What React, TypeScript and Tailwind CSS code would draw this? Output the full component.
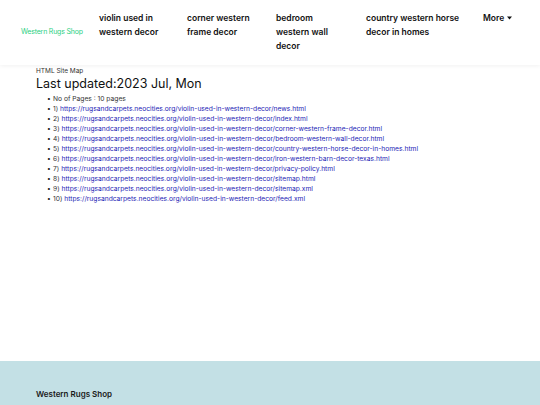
const urls = [
  "news.html",
  "index.html",
  "corner-western-frame-decor.html",
  "bedroom-western-wall-decor.html",
  "country-western-horse-decor-in-homes.html",
  "iron-western-barn-decor-texas.html",
  "privacy-policy.html",
  "sitemap.html",
  "sitemap.xml",
  "feed.xml",
].map((p) => "https://rugsandcarpets.neocities.org/violin-used-in-western-decor/" + p);

const nav = [
  { label: "violin used in western decor", cls: "w-[88px]", inner: "max-w-[72px]" },
  { label: "corner western frame decor", cls: "w-[89px]", inner: "max-w-[72px]" },
  { label: "bedroom western wall decor", cls: "w-[90px]", inner: "max-w-[60px]" },
  { label: "country western horse decor in homes", cls: "w-[117px]", inner: "max-w-[100px]" },
];

function Item({ children }: { children: React.ReactNode }) {
  return (
    <li className="flex">
      <span className="w-[6px] shrink-0 text-[#222]">•</span>
      <span>{children}</span>
    </li>
  );
}

export default function App() {
  return (
    <div className="flex min-h-[405px] flex-col bg-white font-['Inter',sans-serif] text-[#222]">
      <header className="flex h-[65px] items-start shadow-[0_1px_4px_rgba(0,0,0,0.06)]">
        <a className="ml-[21px] mt-[27px] w-[78px] text-[7px] tracking-[-0.2px] text-[#2bd07f]">Western Rugs Shop</a>
        <nav className="mt-[11px] flex">
          {nav.map((n) => (
            <div key={n.label} className={n.cls}>
              <a className={`block text-[8.5px] font-semibold leading-[14px] text-[#111] ${n.inner}`}>{n.label}</a>
            </div>
          ))}
          <a className="flex items-center gap-[3px] self-start text-[8.5px] font-semibold leading-[14px] text-[#111]">
            More
            <svg width="5" height="4" viewBox="0 0 5 4"><path d="M0 0.5h5L2.5 3.5z" fill="#111" /></svg>
          </a>
        </nav>
      </header>

      <main className="flex-1 px-[36px] pt-[2px]">
        <p className="text-[6.5px] leading-[8px] text-[#333]">HTML Site Map</p>
        <h1 className="text-[12.5px] leading-[17px] text-[#111]">Last updated:2023 Jul, Mon</h1>
        <ul className="mt-[2px] pl-[11px] text-[6.7px] leading-[10px] text-[#333]">
          <Item>No of Pages : 10 pages</Item>
          {urls.map((u, i) => (
            <Item key={u}>
              {i + 1}) <a className="text-[#2323b5]">{u}</a>
            </Item>
          ))}
        </ul>
      </main>

      <footer className="h-[44px] bg-[#c3e0e5] px-[36px] pt-[27px]">
        <p className="text-[8px] font-semibold text-[#1a1a1a]">Western Rugs Shop</p>
      </footer>
    </div>
  );
}
